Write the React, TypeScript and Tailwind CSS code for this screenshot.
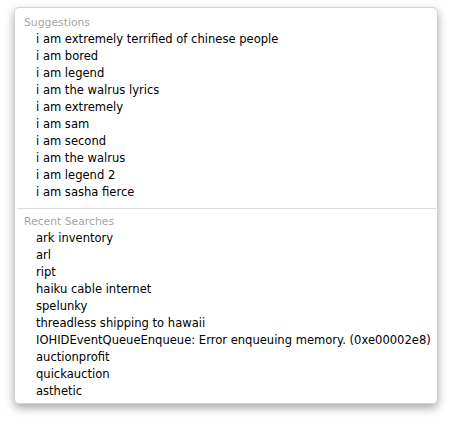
import React from "react";

const suggestions = [
  "i am extremely terrified of chinese people",
  "i am bored",
  "i am legend",
  "i am the walrus lyrics",
  "i am extremely",
  "i am sam",
  "i am second",
  "i am the walrus",
  "i am legend 2",
  "i am sasha fierce",
];

const recent = [
  "ark inventory",
  "arl",
  "ript",
  "haiku cable internet",
  "spelunky",
  "threadless shipping to hawaii",
  "IOHIDEventQueueEnqueue: Error enqueuing memory. (0xe00002e8)",
  "auctionprofit",
  "quickauction",
  "asthetic",
];

export default function App() {
  return (
    <div
      className="w-[452px] h-[424px] bg-white pt-[7px] pl-[14px]"
      style={{ fontFamily: '"DejaVu Sans", "Noto Sans", sans-serif' }}
    >
      <div className="w-[424px] h-[397px] bg-white rounded-[5px] border border-[#d4d4d4] shadow-[0_4px_10px_rgba(0,0,0,0.35)] pt-[6px]">
        <div className="pl-[9px] text-[10.8px] leading-[17px] text-[#a6a6a6]">Suggestions</div>
        <div className="flex flex-col">
          {suggestions.map((s) => (
            <div key={s} className="pl-[21px] text-[11.55px] leading-[17px] text-black">
              {s}
            </div>
          ))}
        </div>
        <div className="mt-[7px] mb-[4px] ml-[2px] mr-[1px] h-px bg-[#dcdcdc]" />
        <div className="pl-[9px] text-[10.8px] leading-[17px] text-[#a6a6a6]">Recent Searches</div>
        <div className="flex flex-col">
          {recent.map((s) => (
            <div key={s} className="pl-[21px] text-[11.55px] leading-[17px] text-black whitespace-nowrap">
              {s}
            </div>
          ))}
        </div>
      </div>
    </div>
  );
}
